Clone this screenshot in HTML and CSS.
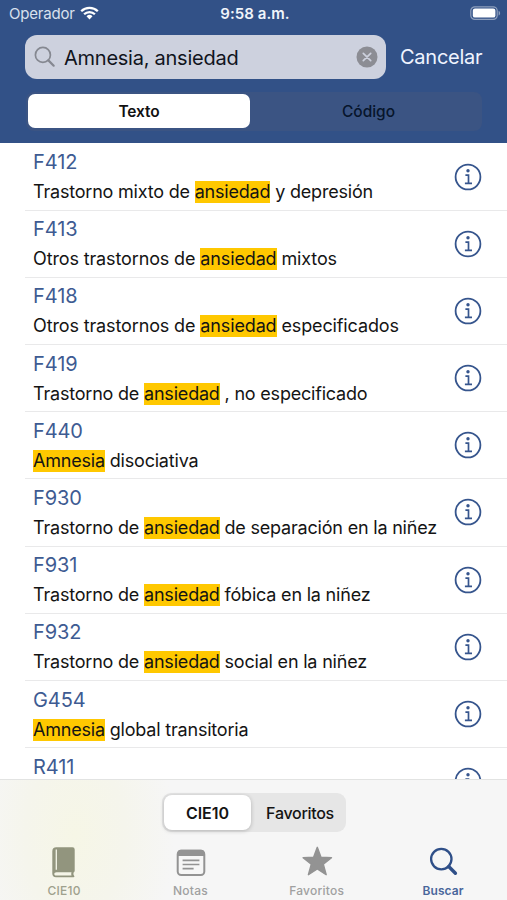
FILE: index.html
```html
<!DOCTYPE html>
<html lang="es">
<head>
<meta charset="utf-8">
<meta name="viewport" content="width=device-width, initial-scale=1">
<title>CIE10 - Buscar</title>
<link rel="stylesheet" href="styles.css">
</head>
<body>
<svg class="defs" width="0" height="0" aria-hidden="true">
  <symbol id="info" viewBox="0 0 28 28">
    <circle cx="14" cy="14" r="12.4" fill="none" stroke="currentColor" stroke-width="1.8"/>
    <circle cx="14" cy="7.8" r="1.7" fill="currentColor"/>
    <path d="M11.4 12.2h3.1v8.1M10.9 20.4h7.1" fill="none" stroke="currentColor" stroke-width="1.7"/>
  </symbol>
</svg>
<div class="app">
  <header class="header">
    <div class="status">
      <div class="carrier"><span>Operador</span>
        <svg class="wifi" viewBox="0 0 19 14" width="19" height="14"><g fill="none" stroke="#fff" stroke-width="2.3"><path d="M1.2 5.2a11.8 11.8 0 0 1 16.6 0"/><path d="M4.1 8.3a7.7 7.7 0 0 1 10.8 0"/></g><path d="M6.5 10.3a4.3 4.3 0 0 1 6 0L9.5 13.6z" fill="#fff"/></svg>
      </div>
      <span class="time">9:58 a.m.</span>
      <svg class="battery" viewBox="0 0 31 15" width="31" height="15"><rect x=".8" y=".8" width="26.4" height="12.6" rx="4" fill="none" stroke="#fff" stroke-opacity=".45" stroke-width="1.2"/><rect x="2.8" y="2.6" width="22.6" height="9" rx="2.2" fill="#fff"/><path d="M28.6 4.7c2 .8 2 4 0 4.8z" fill="#fff" opacity=".45"/></svg>
    </div>
    <div class="search-row">
      <div class="search">
        <svg viewBox="0 0 22 22" width="22" height="22"><circle cx="8.9" cy="8.9" r="7.5" fill="none" stroke="#858891" stroke-width="1.7"/><path d="M14.4 14.4l5.3 5.3" stroke="#858891" stroke-width="2.2" stroke-linecap="round"/></svg>
        <span class="query">Amnesia, ansiedad</span>
        <svg viewBox="0 0 22 22" width="22" height="22"><circle cx="11" cy="11" r="10.5" fill="#8c8d94"/><path d="M7.3 7.3l7.4 7.4M14.7 7.3l-7.4 7.4" stroke="#cdd1de" stroke-width="1.7" stroke-linecap="round"/></svg>
      </div>
      <span class="cancel">Cancelar</span>
    </div>
    <div class="scope"><span class="scope-item active">Texto</span><span class="scope-item">Código</span></div>
  </header>
  <main class="list">
    <article class="row"><div class="text"><h2>F412</h2><p>Trastorno mixto de <mark>ansiedad</mark> y depresión</p></div><svg class="info"><use href="#info"/></svg></article>
    <article class="row"><div class="text"><h2>F413</h2><p class="loose">Otros trastornos de <mark>ansiedad</mark> mixtos</p></div><svg class="info"><use href="#info"/></svg></article>
    <article class="row"><div class="text"><h2>F418</h2><p class="loose">Otros trastornos de <mark>ansiedad</mark> especificados</p></div><svg class="info"><use href="#info"/></svg></article>
    <article class="row"><div class="text"><h2>F419</h2><p>Trastorno de <mark>ansiedad</mark> , no especificado</p></div><svg class="info"><use href="#info"/></svg></article>
    <article class="row"><div class="text"><h2>F440</h2><p><mark>Amnesia</mark> disociativa</p></div><svg class="info"><use href="#info"/></svg></article>
    <article class="row"><div class="text"><h2>F930</h2><p>Trastorno de <mark>ansiedad</mark> de separación en la niñez</p></div><svg class="info"><use href="#info"/></svg></article>
    <article class="row"><div class="text"><h2>F931</h2><p>Trastorno de <mark>ansiedad</mark> fóbica en la niñez</p></div><svg class="info"><use href="#info"/></svg></article>
    <article class="row"><div class="text"><h2>F932</h2><p>Trastorno de <mark>ansiedad</mark> social en la niñez</p></div><svg class="info"><use href="#info"/></svg></article>
    <article class="row"><div class="text"><h2>G454</h2><p><mark>Amnesia</mark> global transitoria</p></div><svg class="info"><use href="#info"/></svg></article>
    <article class="row"><div class="text"><h2>R411</h2></div><svg class="info"><use href="#info"/></svg></article>
  </main>
  <footer class="footer">
    <div class="segment"><span class="seg active">CIE10</span><span class="seg">Favoritos</span></div>
    <nav class="tabs">
      <div class="tab book">
        <svg viewBox="0 0 32 32" width="32" height="32"><path d="M8.3 1.2h16.200a2.200 2.200 0 0 1 2.200 2.200v21.400c0 .9-.5 1.400-1.100 1.700-.3 1.200-.2 2.300.5 3.300.6.7.3 1.500-.6 1.500H8A3.700 3.700 0 0 1 4.300 27.600V5.200a4 4 0 0 1 4-4z" fill="currentColor"/><path d="M8.300 3.400v20.400" stroke="#f5f5e8" stroke-width="1.300"/><path d="M8.500 26.300h15c-.4 1.100-.4 2.200 0 3.300H8.200c-2.600 0-2.600-3.300.3-3.300z" fill="#f5f5e8"/></svg>
        <span>CIE10</span>
      </div>
      <div class="tab">
        <svg viewBox="0 0 32 32" width="32" height="32"><rect x="3.700" y="4.700" width="26.600" height="24.300" rx="3.500" fill="none" stroke="currentColor" stroke-width="2"/><path d="M3.500 10V7A3.500 3.500 0 0 1 7 3.700h20A3.500 3.500 0 0 1 30.500 7v3z" fill="currentColor"/><path d="M8.600 14.300h16.800M8.600 18.500h16.800M8.600 22.700h11" stroke="currentColor" stroke-width="1.700"/></svg>
        <span>Notas</span>
      </div>
      <div class="tab">
        <svg viewBox="0 0 32 32" width="32" height="32"><path d="M16.300 1.300l3.700 9.900 10.500.5-8.200 6.600 2.900 10.400-8.900-5.800-8.900 5.800 2.900-10.400-8.200-6.600 10.500-.5z" fill="currentColor" stroke="currentColor" stroke-width="1.400" stroke-linejoin="round"/></svg>
        <span>Favoritos</span>
      </div>
      <div class="tab current">
        <svg viewBox="0 0 32 32" width="32" height="32"><circle cx="14.300" cy="13.100" r="10.200" fill="none" stroke="currentColor" stroke-width="2.300"/><path d="M21.700 20.500l6.700 6.700" stroke="currentColor" stroke-width="3.400" stroke-linecap="round"/></svg>
        <span>Buscar</span>
      </div>
    </nav>
  </footer>
</div>
</body>
</html>
```
FILE: styles.css
```css
* { box-sizing: border-box; }
body { margin: 0; font-family: Inter, "Liberation Sans", sans-serif; color: #141414; background: #fff; }
svg { flex: none; display: block; }
.defs { position: absolute; }
.app { width: 507px; height: 900px; display: flex; flex-direction: column; overflow: hidden; }

.header { height: 142.5px; flex: none; background: #325187; color: #fff; }
.status { height: 35px; padding: 5px 6px 0 9px; display: grid; grid-template-columns: 1fr auto 1fr; align-items: start; line-height: 18px; }
.carrier { display: flex; gap: 5px; font-size: 15px; letter-spacing: -.2px; color: #d9e0ed; }
.wifi { margin-top: 1px; }
.time { font-size: 15px; font-weight: 600; letter-spacing: .05px; color: #f0f4fa; }
.battery { justify-self: end; margin-top: 1px; }
.search-row { display: flex; align-items: center; padding: 0 25px; gap: 14px; height: 44px; }
.search { width: 361px; height: 44px; flex: none; border-radius: 12px; background: #cdd1de; display: flex; align-items: center; padding: 0 8px 0 9px; }
.query { flex: 1; margin: 1px 0 0 8px; font-size: 20px; letter-spacing: -.25px; color: #11141c; }
.cancel { font-size: 20px; letter-spacing: -.25px; color: #eff4ff; white-space: nowrap; }
.scope { margin: 13px 25px 0 26px; height: 39px; padding: 2px; border-radius: 8px; background: #3b5483; display: flex; }
.scope-item { flex: 1; display: flex; align-items: center; justify-content: center; padding: 0 0 1px 7px; font-size: 15.5px; font-weight: 500; color: #07152b; }
.scope-item.active { flex: none; width: 222px; height: 34px; padding: 0; background: #fff; border-radius: 7px; color: #111; font-weight: 600; letter-spacing: -.1px; }

.list { flex: 1; min-height: 0; overflow: hidden; }
.row { height: 67.2px; margin-left: 25px; padding: 0 25px 0 8px; display: flex; justify-content: space-between; align-items: flex-start; box-shadow: 0 1px 0 #e9e9ea; white-space: nowrap; }
.row h2 { margin: 7.5px 0 0; font-size: 20px; line-height: 24px; font-weight: 400; letter-spacing: -.1px; color: #3e5b92; }
.row p { margin: 7px 0 0; font-size: 18px; line-height: 22px; letter-spacing: -.2px; }
.row p.loose { letter-spacing: -.13px; }
mark { display: inline-block; line-height: 22px; background: #ffc800; color: inherit; }
.info { width: 28px; height: 28px; margin-top: 20px; color: #36558d; }

.footer { height: 121px; flex: none; border-top: 1.5px solid #e2e3e2; background: radial-gradient(ellipse 100px 160px at 75px 55px, #f6f6e6 0%, #f5f5ec 50%, #f6f6f6 100%); }
.segment { width: 184px; height: 39px; margin: 13px 0 0 162px; padding: 2px; border-radius: 9px; background: #e6e6e6; display: flex; }
.seg { flex: 1; display: flex; align-items: center; justify-content: center; padding-left: 5px; font-size: 16px; font-weight: 500; letter-spacing: -.3px; }
.seg.active { flex: none; width: 87px; height: 35px; padding: 0; background: #fff; border-radius: 8px; font-weight: 600; letter-spacing: -.05px; box-shadow: 0 1px 4px rgba(0,0,0,.22); }
.tabs { display: grid; grid-template-columns: repeat(4, 126.3px); margin: 14px 0 0 1px; }
.tab { display: flex; flex-direction: column; align-items: center; color: #939393; }
.tab span { margin-top: 5px; font-size: 12px; line-height: 16px; font-weight: 500; letter-spacing: .25px; color: #a0a0a0; }
.tab.book { color: #92957e; }
.tab.book span { color: #9fa18d; }
.tab.current { color: #2f4f88; }
.tab.current span { color: #49669b; font-weight: 600; letter-spacing: .1px; }
```
